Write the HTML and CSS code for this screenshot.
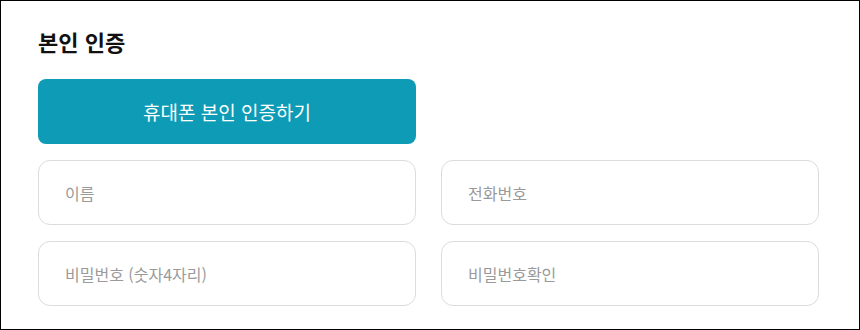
FILE: index.html
```html
<!DOCTYPE html>
<html lang="ko">
<head>
<meta charset="utf-8">
<link rel="stylesheet" href="styles.css">
</head>
<body>
<div class="frame">
  <h2 class="title">본인 인증</h2>
  <div class="grid">
    <button class="verify">휴대폰 본인 인증하기</button>
    <div class="spacer"></div>
    <div class="field">이름</div>
    <div class="field">전화번호</div>
    <div class="field">비밀번호 (숫자4자리)</div>
    <div class="field">비밀번호확인</div>
  </div>
</div>
</body>
</html>
```
FILE: styles.css
```css
* { box-sizing: border-box; }
html, body { margin: 0; padding: 0; background: #fff; }
body { font-family: "Noto Sans CJK KR", "Noto Sans", sans-serif; }
.frame {
  width: 860px;
  height: 330px;
  border: 1px solid #000;
  padding: 25px 0 0 37px;
}
.title {
  margin: 0 0 23px 0;
  font-size: 22px;
  line-height: 30px;
  font-weight: 700;
  color: #111;
}
.grid {
  display: grid;
  grid-template-columns: 378px 378px;
  grid-auto-rows: 65px;
  column-gap: 25px;
  row-gap: 16px;
}
.verify {
  border: none;
  border-radius: 8px;
  background: #0e9bb5;
  color: #fff;
  font-family: inherit;
  font-size: 19px;
  font-weight: 400;
  padding: 0;
  margin: 0;
}
.field {
  border: 1px solid #dcdcdc;
  border-radius: 12px;
  padding-left: 26px;
  display: flex;
  align-items: center;
  font-size: 16px;
  color: #9a9a9a;
}
```
